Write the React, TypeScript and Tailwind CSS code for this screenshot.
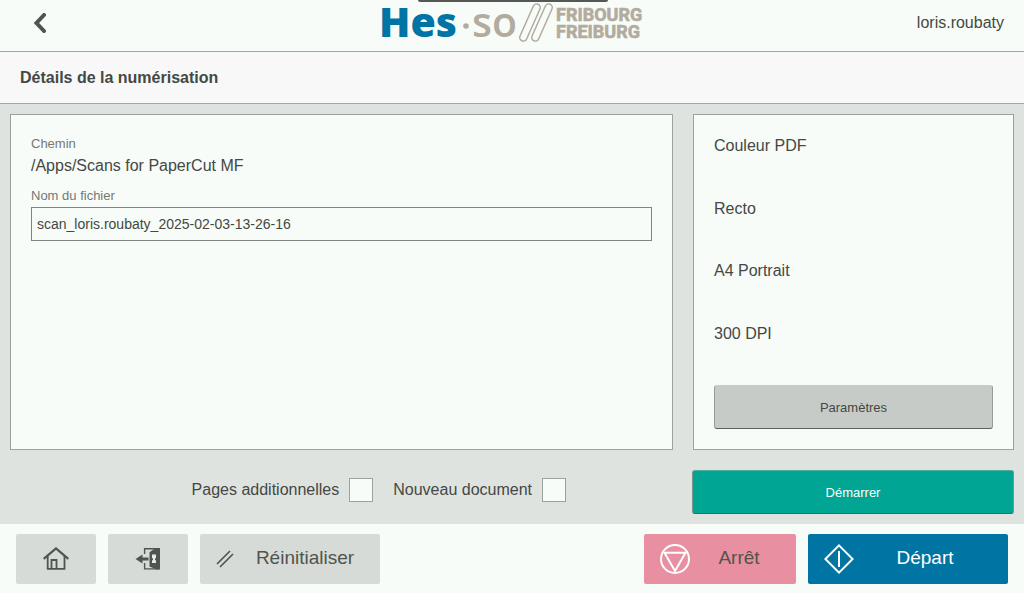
import clsx from "clsx";
import { ReactNode, useState } from "react";

const SETTINGS = ["Couleur PDF", "Recto", "A4 Portrait", "300 DPI"];

const Logo = () => (
  <svg
    width="264"
    height="44"
    viewBox="0 0 264 44"
    role="img"
    aria-label="Hes-so Fribourg Freiburg"
    className="overflow-visible"
  >
    <text x="-1" y="37" fill="#0075a5" className="font-['Open_Sans',sans-serif] text-[41px] font-extrabold">
      Hes
    </text>
    <circle cx="86" cy="26" r="2.8" fill="#b2ab9e" />
    <text x="92" y="37" fill="#b2ab9e" className="font-['Open_Sans',sans-serif] text-[41px] font-semibold">
      so
    </text>
    <g fill="none" stroke="#b2ab9e" strokeWidth="1.5">
      <rect x="-3.6" y="-20" width="7.2" height="40" rx="3.6" transform="translate(150 22.5) rotate(24)" />
      <rect x="-3.6" y="-20" width="7.2" height="40" rx="3.6" transform="translate(162 22.5) rotate(24)" />
    </g>
    <g
      fill="#b2ab9e"
      stroke="#b2ab9e"
      strokeWidth="0.6"
      strokeLinejoin="round"
      className="font-['Roboto',sans-serif] text-[18px] font-bold"
    >
      <text x="176" y="21">
        FRIBOURG
      </text>
      <text x="176" y="38">
        FREIBURG
      </text>
    </g>
  </svg>
);

const BackIcon = () => (
  <svg width="14" height="20" viewBox="0 0 14 20" fill="none" stroke="#50544f" strokeWidth="4">
    <path d="M11 2 3.500 10l7.500 8" strokeLinecap="round" strokeLinejoin="miter" />
  </svg>
);

const HomeIcon = () => (
  <svg width="26" height="24" viewBox="0 0 26 24" fill="none" stroke="#50544f" strokeWidth="1.8">
    <path d="M0.700 11.800 13 1.400 25.300 11.800" strokeWidth="2.2" />
    <path d="M4.700 9v12.800h16.800V9" />
    <path d="M8.500 21.500v-8.500h5v8.500" />
  </svg>
);

const ExitIcon = () => (
  <svg width="26" height="24" viewBox="0 0 26 24">
    <path d="M9.600 7V1.700H24M9.600 16v5.900H24" fill="none" stroke="#50544f" strokeWidth="1.400" />
    <path d="M25 1v21.600h-3.500l-7-3V5.200L18.500 2.500 21.500 1Z" fill="#50544f" />
    <path d="M0.500 12 7.500 7.500v3h6v3h-6v3Z" fill="#50544f" />
    <path d="M17 7.500h4v3.700h-1v2h1V16h-4v-2.800h1v-2h-1Z" fill="#e8ebe8" />
  </svg>
);

const ResetIcon = () => (
  <svg width="18" height="18" viewBox="0 0 18 18" fill="none" stroke="#50544f" strokeWidth="1.600">
    <path d="M1 14 14 1M4 17 17 4" />
  </svg>
);

const StopIcon = () => (
  <svg width="30" height="30" viewBox="0 0 30 30" fill="none" stroke="#ffffff" strokeWidth="2">
    <circle cx="15" cy="15" r="14" />
    <path d="M4.500 8.800h21L15 27Z" />
  </svg>
);

const StartIcon = () => (
  <svg width="30" height="30" viewBox="0 0 30 30" fill="none" stroke="#ffffff" strokeWidth="2">
    <path d="M15 1.400 28.600 15 15 28.600 1.400 15ZM15 7v16" />
  </svg>
);

const CheckOption = ({ id, label }: { id: string; label: string }) => {
  const [checked, setChecked] = useState(false);

  return (
    <div className="flex items-center gap-x-2.5">
      <label htmlFor={id} className="leading-6">
        {label}
      </label>
      <input
        id={id}
        type="checkbox"
        checked={checked}
        onChange={() => setChecked(!checked)}
        className="size-6 appearance-none border border-[#9ba19c] bg-[#f7fcf8] checked:bg-[#00a693]"
      />
    </div>
  );
};

interface KeyProps {
  icon: ReactNode;
  label: string;
  className: string;
}

const FooterKey = ({ icon, label, className }: KeyProps) => (
  <button
    type="button"
    className={clsx("flex h-[50px] items-center rounded-[2px] pl-4 text-[19px]", className)}
  >
    {icon}
    <span className="flex-1 pb-0.5 text-center">{label}</span>
  </button>
);

const App = () => {
  const [fileName, setFileName] = useState("scan_loris.roubaty_2025-02-03-13-26-16");

  return (
    <div className="flex min-h-screen flex-col bg-[#dfe3df] font-['Liberation_Sans',Arial,sans-serif] text-base text-[#444844]">
      {/* Header */}
      <header className="relative grid h-[52px] grid-cols-[1fr_auto_1fr] border-b border-[#9fa8a0] bg-[#f7fcf8] px-5">
        <div className="absolute top-0 left-1/2 ml-[-94px] h-0.5 w-[190px] rounded-b-sm bg-[#555855]" />
        <button type="button" aria-label="Retour" className="mt-[13px] ml-[13px] h-5 w-fit">
          <BackIcon />
        </button>
        <Logo />
        <span className="mt-[11px] text-right">loris.roubaty</span>
      </header>

      <div className="flex h-[52px] items-center border-b border-[#9fa8a0] bg-[#f8f8f8] px-5">
        <h1 className="font-bold">Détails de la numérisation</h1>
      </div>

      {/* Scan details */}
      <main className="flex flex-1 flex-col gap-y-5 p-2.5">
        <div className="flex flex-1 gap-x-5">
          <section className="flex-1 border border-[#9ba19c] bg-[#f7fcf8] px-5 pt-[21px] pb-5">
            <p className="text-[13px] leading-4 text-[#747874]">Chemin</p>
            <p className="mt-0.5 leading-6">/Apps/Scans for PaperCut MF</p>
            <label htmlFor="filename" className="mt-2.5 block text-[13px] leading-4 text-[#747874]">
              Nom du fichier
            </label>
            <input
              id="filename"
              type="text"
              value={fileName}
              onChange={(e) => setFileName(e.target.value)}
              className="mt-[3px] h-[34px] w-full border border-[#808580] px-[5px] text-sm"
            />
          </section>

          <section className="flex w-[321px] flex-col justify-between border border-[#9ba19c] bg-[#f7fcf8] p-5">
            {SETTINGS.map((setting) => (
              <p key={setting} className="leading-[22px]">
                {setting}
              </p>
            ))}
            <button
              type="button"
              className="h-11 rounded-[3px] border border-t-[#c7cbc7] border-r-[#969b96] border-b-[#5c615c] border-l-[#969b96] bg-[#c7cbc7] pt-0.5 text-[13px]"
            >
              Paramètres
            </button>
          </section>
        </div>

        <div className="flex">
          <div className="flex flex-1 items-start justify-end gap-x-5 pt-2 pr-[126px]">
            <CheckOption id="more-pages" label="Pages additionnelles" />
            <CheckOption id="new-document" label="Nouveau document" />
          </div>
          <button
            type="button"
            className="h-11 w-[322px] rounded-[3px] border border-t-[#4fae9f] border-r-[#7d918b] border-b-[#4e615c] border-l-[#7d918b] bg-[#00a693] pt-0.5 text-[13px] text-white"
          >
            Démarrer
          </button>
        </div>
      </main>

      {/* Device keys */}
      <footer className="flex gap-x-3 bg-[#f7fcf8] px-4 pt-2.5 pb-[9px] text-[#50544f]">
        <button
          type="button"
          aria-label="Accueil"
          className="flex h-[50px] w-20 items-center justify-center rounded-[2px] bg-[#d7dbd7]"
        >
          <HomeIcon />
        </button>
        <button
          type="button"
          aria-label="Déconnexion"
          className="flex h-[50px] w-20 items-center justify-center rounded-[2px] bg-[#d7dbd7]"
        >
          <ExitIcon />
        </button>
        <FooterKey icon={<ResetIcon />} label="Réinitialiser" className="w-[180px] bg-[#d7dbd7] pr-1" />
        <FooterKey icon={<StopIcon />} label="Arrêt" className="ml-auto w-[152px] bg-[#e88fa1] pr-2" />
        <FooterKey icon={<StartIcon />} label="Départ" className="w-[200px] bg-[#0074a2] pr-3 text-white" />
      </footer>
    </div>
  );
};

export default App;
